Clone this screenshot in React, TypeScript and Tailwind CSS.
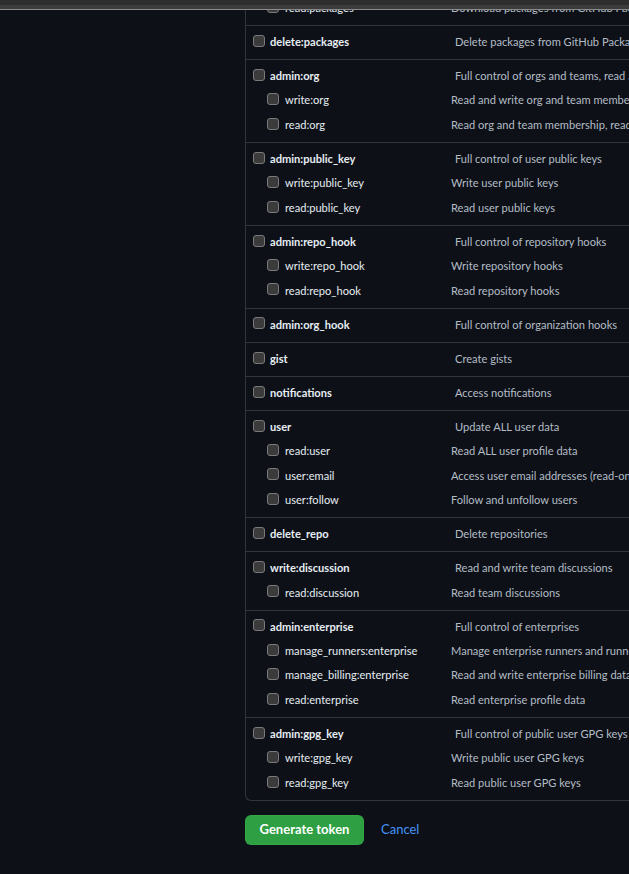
import React from "react";

type Scope = {
  name: string;
  desc: string;
  children?: { name: string; desc: string }[];
};

const scopes: Scope[] = [
  { name: "delete:packages", desc: "Delete packages from GitHub Packages" },
  {
    name: "admin:org",
    desc: "Full control of orgs and teams, read and write org projects",
    children: [
      { name: "write:org", desc: "Read and write org and team membership, read and write org projects" },
      { name: "read:org", desc: "Read org and team membership, read org projects" },
    ],
  },
  {
    name: "admin:public_key",
    desc: "Full control of user public keys",
    children: [
      { name: "write:public_key", desc: "Write user public keys" },
      { name: "read:public_key", desc: "Read user public keys" },
    ],
  },
  {
    name: "admin:repo_hook",
    desc: "Full control of repository hooks",
    children: [
      { name: "write:repo_hook", desc: "Write repository hooks" },
      { name: "read:repo_hook", desc: "Read repository hooks" },
    ],
  },
  { name: "admin:org_hook", desc: "Full control of organization hooks" },
  { name: "gist", desc: "Create gists" },
  { name: "notifications", desc: "Access notifications" },
  {
    name: "user",
    desc: "Update ALL user data",
    children: [
      { name: "read:user", desc: "Read ALL user profile data" },
      { name: "user:email", desc: "Access user email addresses (read-only)" },
      { name: "user:follow", desc: "Follow and unfollow users" },
    ],
  },
  { name: "delete_repo", desc: "Delete repositories" },
  {
    name: "write:discussion",
    desc: "Read and write team discussions",
    children: [{ name: "read:discussion", desc: "Read team discussions" }],
  },
  {
    name: "admin:enterprise",
    desc: "Full control of enterprises",
    children: [
      { name: "manage_runners:enterprise", desc: "Manage enterprise runners and runner groups" },
      { name: "manage_billing:enterprise", desc: "Read and write enterprise billing data" },
      { name: "read:enterprise", desc: "Read enterprise profile data" },
    ],
  },
  {
    name: "admin:gpg_key",
    desc: "Full control of public user GPG keys (Developer Preview)",
    children: [
      { name: "write:gpg_key", desc: "Write public user GPG keys" },
      { name: "read:gpg_key", desc: "Read public user GPG keys" },
    ],
  },
];

const Box = () => (
  <span className="inline-block w-[12px] h-[12px] shrink-0 rounded-[3px] bg-[#3b3b3b] border border-[#7a7a7a] -mt-[3px]" />
);

const TopRow = ({ name, desc }: { name: string; desc: string }) => (
  <div className="flex items-center h-[24.45px] pl-[7px] whitespace-nowrap">
    <div className="flex items-center w-[202px] shrink-0">
      <Box />
      <span className="ml-[5px] font-bold text-[#e6edf3]">{name}</span>
    </div>
    <span className="text-[#b4bcc6]">{desc}</span>
  </div>
);

const ChildRow = ({ name, desc }: { name: string; desc: string }) => (
  <div className="flex items-center h-[24.45px] pl-[21px] whitespace-nowrap">
    <div className="flex items-center w-[184px] shrink-0">
      <Box />
      <span className="ml-[6px] text-[#e6edf3]">{name}</span>
    </div>
    <span className="text-[#b4bcc6]">{desc}</span>
  </div>
);

export default function App() {
  return (
    <div
      className="relative min-h-[874px] bg-[#0d1117] overflow-hidden text-[11.1px]"
      style={{ fontFamily: "Lato, 'Noto Sans', sans-serif" }}
    >
      <div className="absolute top-0 left-0 right-0 h-[10px] bg-[#2e2e2e] border-b border-[#8a8a8a] z-10">
        <div className="mt-[5px] h-[4px] bg-[#3c3c3c]" />
      </div>
      <div className="ml-[245px] w-[420px]">
        <div className="border-l border-b border-[#30363d] -mt-[4px] pb-[4.6px]">
          <ChildRow name="read:packages" desc="Download packages from GitHub Packages" />
        </div>
        <div className="border-l border-b border-[#30363d] rounded-bl-[6px]">
          {scopes.map((s, i) => (
            <div
              key={s.name}
              className={`pt-[4px] pb-[4.6px] ${i < scopes.length - 1 ? "border-b border-[#30363d]" : ""}`}
            >
              <TopRow name={s.name} desc={s.desc} />
              {s.children?.map((c) => <ChildRow key={c.name} name={c.name} desc={c.desc} />)}
            </div>
          ))}
        </div>
        <div className="flex items-center mt-[14px]">
          <button className="h-[30px] w-[119px] rounded-[6px] bg-[#2ea043] text-white font-bold text-[13px] border border-[#3fb950]/30">
            Generate token
          </button>
          <a className="ml-[17px] text-[#4493f8] text-[13px]">Cancel</a>
        </div>
      </div>
    </div>
  );
}
